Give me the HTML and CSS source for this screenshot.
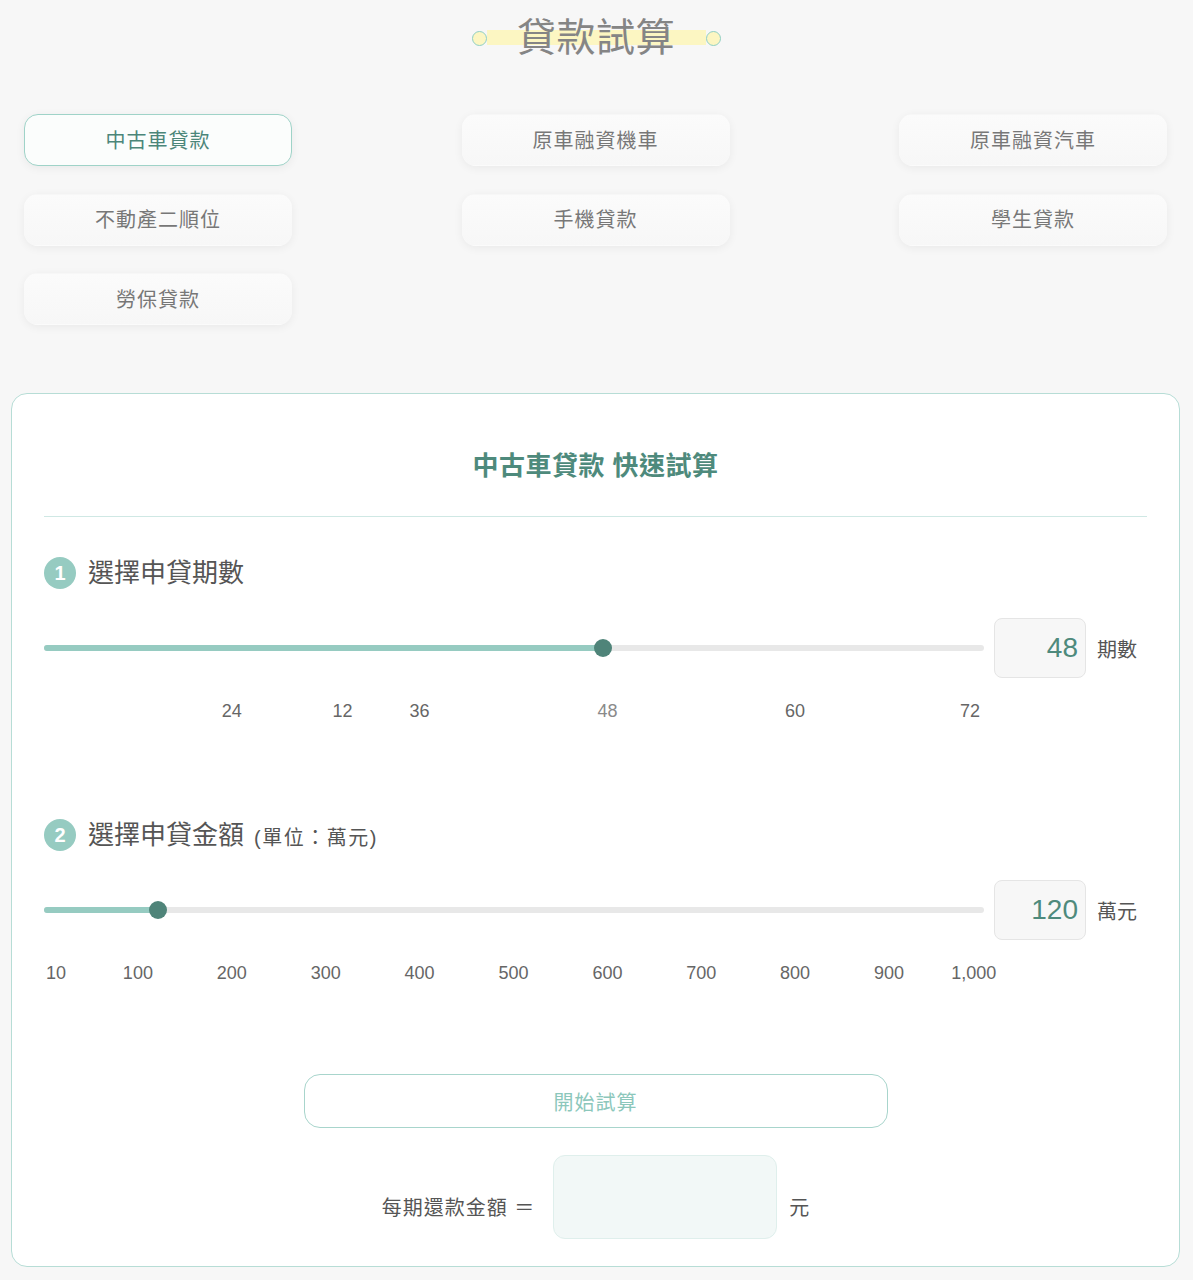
FILE: index.html
```html
<!DOCTYPE html>
<html lang="zh-Hant">
<head>
<meta charset="utf-8">
<title>貸款試算</title>
<link rel="stylesheet" href="styles.css">
</head>
<body>
<header class="page-head">
  <div class="title-deco">
    <span class="dot"></span>
    <h1 class="title">貸款試算</h1>
    <span class="dot"></span>
  </div>
</header>

<nav class="tabs">
  <button class="tab is-active">中古車貸款</button>
  <button class="tab">原車融資機車</button>
  <button class="tab">原車融資汽車</button>
  <button class="tab">不動產二順位</button>
  <button class="tab">手機貸款</button>
  <button class="tab">學生貸款</button>
  <button class="tab">勞保貸款</button>
</nav>

<section class="card">
  <h2 class="card-title">中古車貸款 快速試算</h2>
  <hr class="divider">

  <div class="step">
    <div class="step-head"><span class="step-no">1</span><span class="step-label">選擇申貸期數</span></div>
    <div class="slider-row">
      <div class="track"><div class="fill" style="width:59.5%"><span class="thumb"></span></div></div>
      <div class="value-box">48</div>
      <div class="unit">期數</div>
    </div>
    <div class="ticks">
      <span class="tick" style="left:19.98%">24</span>
      <span class="tick" style="left:31.77%">12</span>
      <span class="tick" style="left:39.96%">36</span>
      <span class="tick tick-current" style="left:59.94%">48</span>
      <span class="tick" style="left:79.9%">60</span>
      <span class="tick" style="left:98.5%">72</span>
    </div>
  </div>

  <div class="step step-2">
    <div class="step-head"><span class="step-no">2</span><span class="step-label">選擇申貸金額</span><span class="step-note">(單位：萬元)</span></div>
    <div class="slider-row">
      <div class="track"><div class="fill" style="width:12.1%"><span class="thumb"></span></div></div>
      <div class="value-box">120</div>
      <div class="unit">萬元</div>
    </div>
    <div class="ticks">
      <span class="tick" style="left:1.28%">10</span>
      <span class="tick" style="left:9.99%">100</span>
      <span class="tick" style="left:19.98%">200</span>
      <span class="tick" style="left:29.97%">300</span>
      <span class="tick" style="left:39.96%">400</span>
      <span class="tick" style="left:49.95%">500</span>
      <span class="tick" style="left:59.94%">600</span>
      <span class="tick" style="left:69.93%">700</span>
      <span class="tick" style="left:79.9%">800</span>
      <span class="tick" style="left:89.9%">900</span>
      <span class="tick" style="left:98.9%">1,000</span>
    </div>
  </div>

  <div class="action">
    <button class="calc-btn">開始試算</button>
  </div>

  <div class="result">
    <span class="result-label">每期還款金額 ＝</span>
    <div class="result-box"></div>
    <span class="result-unit">元</span>
  </div>
</section>
</body>
</html>
```

FILE: styles.css
```css
* { box-sizing: border-box; }

body {
  margin: 0 0 13px;
  background: #f7f7f7;
  font-family: "Liberation Sans", "Noto Sans CJK TC", sans-serif;
  color: #555;
}

.page-head {
  display: flex;
  justify-content: center;
  padding-top: 14px;
}

.title-deco {
  display: flex;
  align-items: center;
}

.dot {
  width: 15px;
  height: 15px;
  border-radius: 50%;
  border: 1.5px solid #8fcfc4;
  background: #fcf6c2;
}

.title {
  margin: 0;
  padding: 0 31px 0 30px;
  font-size: 39px;
  line-height: 48px;
  font-weight: 400;
  color: #858585;
  letter-spacing: 0.5px;
  background: linear-gradient(to bottom, transparent calc(50% - 8px), #fcf6c2 calc(50% - 8px), #fcf6c2 calc(50% + 7px), transparent calc(50% + 7px));
}

.tabs {
  display: grid;
  grid-template-columns: repeat(3, 268px);
  justify-content: space-between;
  row-gap: 27.5px;
  padding: 0 26px 0 24px;
  margin-top: 52px;
}

.tab {
  height: 52px;
  padding: 0 0 2px;
  border: 1px solid transparent;
  border-radius: 14px;
  background: linear-gradient(#fbfbfb, #f7f7f7);
  box-shadow: 0 2px 10px rgba(0, 0, 0, 0.06);
  font-family: inherit;
  font-size: 20px;
  letter-spacing: 1px;
  color: #777;
  cursor: pointer;
}

.tab.is-active {
  border-color: #9fd3c8;
  background: #fbfdfc;
  color: #4b8679;
}

.card {
  margin: 68px 13px 0 11px;
  padding: 54px 32px 27px;
  background: #fff;
  border: 1px solid #b7ddd6;
  border-radius: 16px;
}

.card-title {
  margin: 0;
  text-align: center;
  font-size: 26px;
  line-height: 36px;
  font-weight: 600;
  letter-spacing: 0.5px;
  color: #4e8a7c;
}

.divider {
  margin: 32px 0 0;
  border: 0;
  border-top: 1px solid #cfe8e4;
}

.step { margin-top: 38px; }
.step-2 { margin-top: 96px; }

.step-head {
  display: flex;
  align-items: center;
  height: 36px;
}

.step-no {
  width: 32px;
  height: 32px;
  border-radius: 50%;
  background: #96cbc1;
  color: #fff;
  font-size: 20px;
  font-weight: 700;
  line-height: 32px;
  text-align: center;
  margin-right: 12px;
}

.step-label {
  font-size: 26px;
  line-height: 36px;
  color: #555;
}

.step-note {
  font-size: 20px;
  letter-spacing: 1.5px;
  color: #555;
  margin-left: 10px;
  margin-top: 2px;
}

.slider-row {
  display: flex;
  align-items: center;
  margin-top: 27px;
  height: 60px;
}

.track {
  flex: 1;
  height: 6px;
  border-radius: 3px;
  background: #e8e8e8;
  margin-right: 10px;
}

.fill {
  position: relative;
  height: 100%;
  border-radius: 3px;
  background: #96cbc1;
}

.thumb {
  position: absolute;
  right: -9px;
  top: 50%;
  width: 18px;
  height: 18px;
  margin-top: -9px;
  border-radius: 50%;
  background: #4f8479;
}

.value-box {
  width: 92px;
  height: 60px;
  border: 1px solid #e5e5e5;
  border-radius: 8px;
  background: #f7f7f7;
  text-align: right;
  padding-right: 7px;
  font-size: 28px;
  line-height: 58px;
  color: #4e8a7c;
}

.unit {
  width: 50px;
  margin-left: 11px;
  font-size: 20px;
  color: #555;
}

.ticks {
  position: relative;
  height: 20px;
  margin-top: 23px;
  margin-right: 163px;
}

.tick {
  position: absolute;
  top: 0;
  transform: translateX(-50%);
  font-size: 18px;
  line-height: 20px;
  color: #666;
  white-space: nowrap;
}

.tick-current { color: #8a8a8a; }

.action {
  display: flex;
  justify-content: center;
  margin-top: 91px;
}

.calc-btn {
  width: 584px;
  height: 54px;
  border: 1px solid #a8d5cc;
  border-radius: 16px;
  background: #fff;
  font-family: inherit;
  font-size: 20px;
  letter-spacing: 1px;
  color: #8cc7bb;
  cursor: pointer;
}

.result {
  display: flex;
  justify-content: center;
  align-items: center;
  margin-top: 27px;
}

.result-label {
  font-size: 20px;
  letter-spacing: 1px;
  color: #555;
  margin-right: 18px;
  margin-top: 18px;
}

.result-box {
  width: 224px;
  height: 84px;
  border: 1px solid #dfefec;
  border-radius: 12px;
  background: #f2f8f7;
}

.result-unit {
  font-size: 20px;
  color: #555;
  margin-left: 12px;
  margin-top: 18px;
}
```
